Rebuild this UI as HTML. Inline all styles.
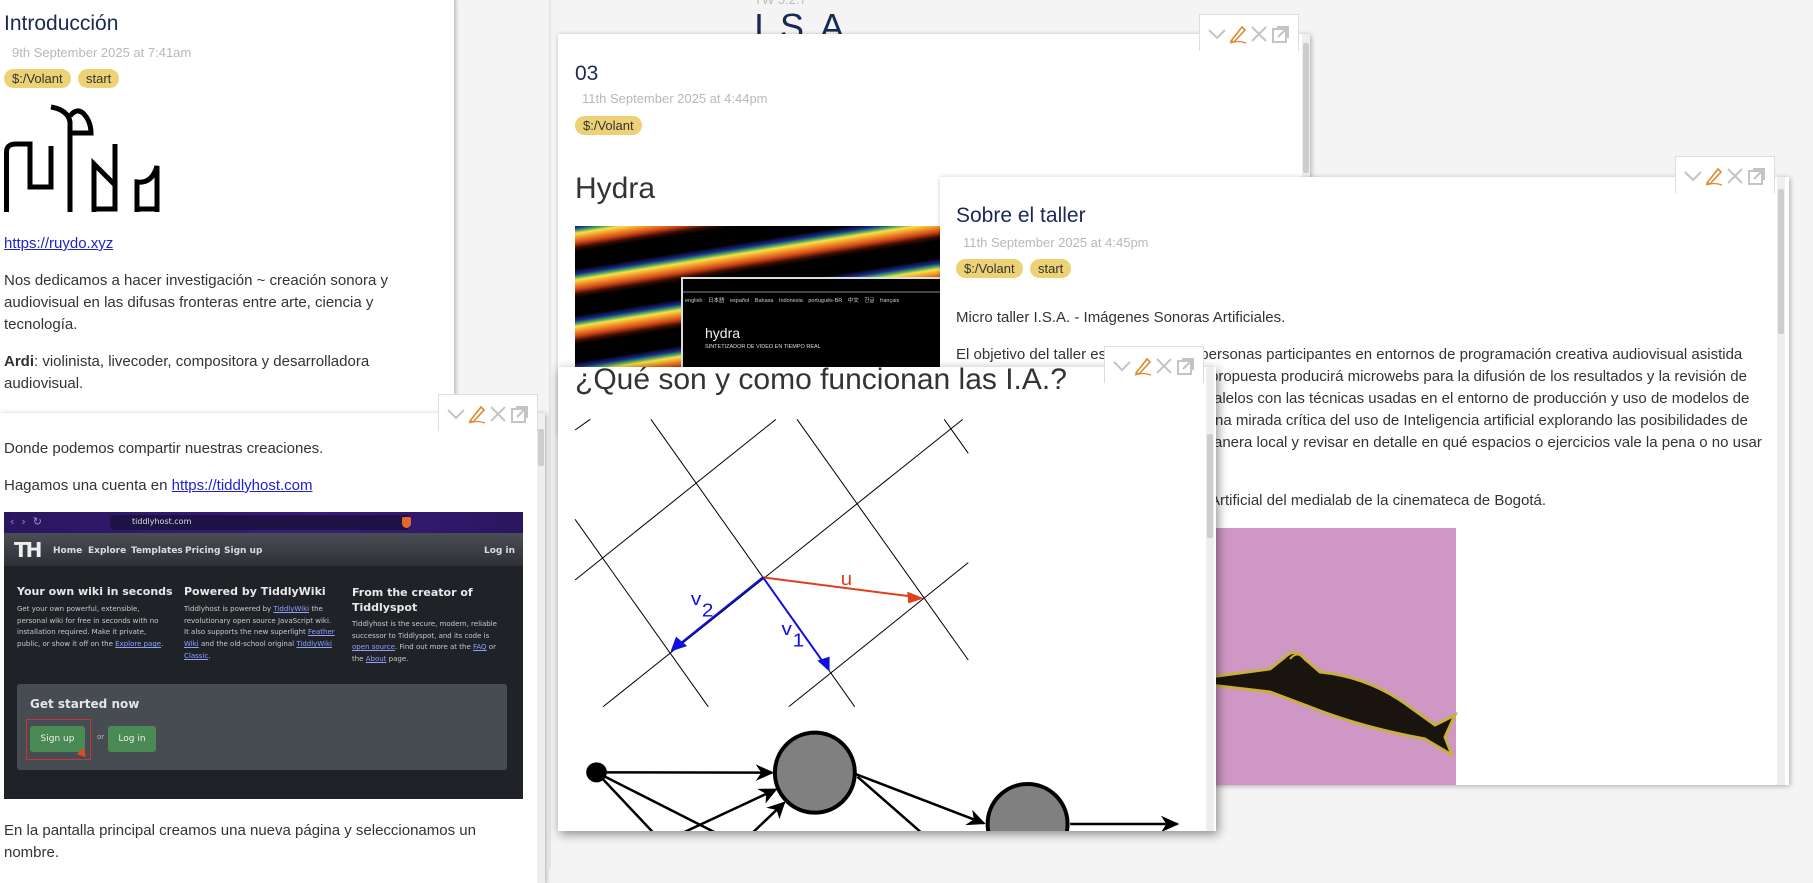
<!DOCTYPE html>
<html><head><meta charset="utf-8">
<style>
*{box-sizing:border-box;margin:0;padding:0}
body{width:1813px;height:869px;overflow:hidden;background:#f4f4f4;font-family:"Liberation Sans","Noto Sans CJK JP",sans-serif;color:#333;position:relative}
.p{position:absolute;background:#fff;overflow:hidden}
.sh{box-shadow:1px 1px 5px rgba(0,0,0,.3)}
.a{position:absolute;white-space:nowrap}
.t{color:#182955;font-size:21px}
.d{color:#b8b8b8;font-size:13px}
.tag{position:absolute;background:#ecd175;color:#333;font-size:13px;height:19px;line-height:19px;border-radius:10px;padding:0 8px;white-space:nowrap}
.b{font-size:15px;line-height:22px}
.bar{position:absolute;width:100px;height:37px;background:#fff;border:1px solid #ddd;border-bottom:none;z-index:5}
.bar svg{position:absolute;left:8px;top:9px}
.sb{position:absolute;width:8px;background:#eee}
.sb i{position:absolute;left:1px;width:6px;background:#cdcdcd;border-radius:2px}
a{color:#2222cc}
.th{font-family:"DejaVu Sans",sans-serif}
</style></head><body>

<!-- header -->
<div class="a" style="left:754px;top:-8px;font-size:13px;color:#bbb">TW 5.2.7</div>
<div class="a" style="left:754px;top:6px;font-size:36px;color:#182955;letter-spacing:3px">I.S.A</div>
<div style="position:absolute;left:549px;top:0;width:2px;height:869px;background:#e6e6e6"></div>

<!-- left top panel -->
<div class="p sh" style="left:0;top:-5px;width:454px;height:418px">
  <div class="a t" style="left:4px;top:17px">Introducción</div>
  <div class="a d" style="left:12px;top:50px">9th September 2025 at 7:41am</div>
  <div class="tag" style="left:4px;top:74px">$:/Volant</div>
  <div class="tag" style="left:78px;top:74px">start</div>
  <svg style="position:absolute;left:4px;top:107px" width="156" height="110" viewBox="0 0 156 110" fill="none" stroke="#000" stroke-width="5">
    <path d="M2.5 110 V50 Q2.5 42 12 42 H26 V59 M26 59 V85 H47 V44"/>
    <path d="M47 5 Q64 8 66 20 V110 M66 14 Q73 5 80 12 Q87 20 87 31 H66"/>
    <path d="M90 110 V62 L111 83 V42 M90 107 H111 V80"/>
    <path d="M133 110 V80 Q148 82 153 64 V110 M131 107 H153"/>
  </svg>
  <div class="a b" style="left:4px;top:238px"><a href="#">https://ruydo.xyz</a></div>
  <div class="a b" style="left:4px;top:275px">Nos dedicamos a hacer investigación ~ creación sonora y<br>audiovisual en las difusas fronteras entre arte, ciencia y<br>tecnología.</div>
  <div class="a b" style="left:4px;top:356px"><b>Ardi</b>: violinista, livecoder, compositora y desarrolladora<br>audiovisual.</div>
</div>

<!-- left second panel -->
<div class="bar" style="left:438px;top:394px"><svg width="88" height="20" viewBox="0 0 88 20"><g fill="none" stroke="#c4c4c4" stroke-width="2"><path d="M1 6 L9 14 L17 6"/><path d="M44 3 L58 17 M58 3 L44 17"/></g><path d="M23 17 L34 3 L37 6 L26 18 Z" fill="none" stroke="#e08a2e" stroke-width="1.6"/><path d="M22 19 Q30 16 38 19" fill="none" stroke="#e08a2e" stroke-width="1.3"/><g fill="none" stroke="#c4c4c4" stroke-width="2"><rect x="65" y="5" width="13" height="13"/><path d="M69 3 H80 V14"/><path d="M70 13 L79 4"/></g></svg></div>
<div class="p sh" style="left:0;top:413px;width:545px;height:470px">
  <div class="a b" style="left:4px;top:25px">Donde podemos compartir nuestras creaciones.</div>
  <div class="a b" style="left:4px;top:62px">Hagamos una cuenta en <a href="#">https://tiddlyhost.com</a></div>
  <div style="position:absolute;left:4px;top:99px;width:519px;height:287px;background:#1f2328;overflow:hidden" class="th">
    <div style="position:absolute;left:0;top:0;width:519px;height:21px;background:linear-gradient(90deg,#2a1660,#3a1c7a 60%,#2a1660)"></div>
    <div class="a" style="left:6px;top:3px;font-size:11px;color:#9a8fd0">‹ &nbsp;› &nbsp;↻</div>
    <div style="position:absolute;left:106px;top:3px;width:300px;height:15px;background:#1f1245;border-radius:4px"></div>
    <div class="a" style="left:128px;top:5px;font-size:8px;color:#ddd">tiddlyhost.com</div>
    <div style="position:absolute;left:398px;top:5px;width:9px;height:11px;background:#e0682a;border-radius:2px 2px 5px 5px"></div>
    <div style="position:absolute;left:0;top:21px;width:519px;height:33px;background:linear-gradient(#4a4d54,#2e3136)"></div>
    <div class="a" style="left:10px;top:26px;font-size:20px;font-weight:bold;color:#eee;letter-spacing:-2px">TH</div>
    <div class="a" style="left:49px;top:34px;font-size:9px;font-weight:bold;color:#ddd">Home</div>
    <div class="a" style="left:84px;top:34px;font-size:9px;font-weight:bold;color:#ddd">Explore</div>
    <div class="a" style="left:127px;top:34px;font-size:9px;font-weight:bold;color:#ddd">Templates</div>
    <div class="a" style="left:181px;top:34px;font-size:9px;font-weight:bold;color:#ddd">Pricing</div>
    <div class="a" style="left:220px;top:34px;font-size:9px;font-weight:bold;color:#ddd">Sign up</div>
    <div class="a" style="left:480px;top:34px;font-size:9px;font-weight:bold;color:#ddd">Log in</div>
    <div class="a" style="left:13px;top:73px;font-size:11px;font-weight:bold;color:#e8e8e8">Your own wiki in seconds</div>
    <div class="a" style="left:180px;top:73px;font-size:11px;font-weight:bold;color:#e8e8e8">Powered by TiddlyWiki</div>
    <div class="a" style="left:348px;top:73px;font-size:11px;font-weight:bold;color:#e8e8e8;line-height:15px">From the creator of<br>Tiddlyspot</div>
    <div class="a" style="left:13px;top:92px;font-size:7px;line-height:11.7px;color:#c8c8c8">Get your own powerful, extensible,<br>personal wiki for free in seconds with no<br>installation required. Make it private,<br>public, or show it off on the <u style="color:#8fa0ff">Explore page</u>.</div>
    <div class="a" style="left:180px;top:92px;font-size:7px;line-height:11.7px;color:#c8c8c8">Tiddlyhost is powered by <u style="color:#8fa0ff">TiddlyWiki</u> the<br>revolutionary open source JavaScript wiki.<br>It also supports the new superlight <u style="color:#8fa0ff">Feather</u><br><u style="color:#8fa0ff">Wiki</u> and the old-school original <u style="color:#8fa0ff">TiddlyWiki</u><br><u style="color:#8fa0ff">Classic</u>.</div>
    <div class="a" style="left:348px;top:107px;font-size:7px;line-height:11.7px;color:#c8c8c8">Tiddlyhost is the secure, modern, reliable<br>successor to Tiddlyspot, and its code is<br><u style="color:#8fa0ff">open source</u>. Find out more at the <u style="color:#8fa0ff">FAQ</u> or<br>the <u style="color:#8fa0ff">About</u> page.</div>
    <div style="position:absolute;left:13px;top:172px;width:490px;height:86px;background:#474b52;border-radius:3px"></div>
    <div class="a" style="left:26px;top:185px;font-size:12px;font-weight:bold;color:#e5e5e5">Get started now</div>
    <div style="position:absolute;left:22px;top:207px;width:65px;height:41px;border:1px solid #c33"></div>
    <div style="position:absolute;left:26px;top:214px;width:55px;height:26px;background:#4a8a55;border-radius:3px;color:#eee;font-size:9px;text-align:center;line-height:26px">Sign up</div>
    <div class="a" style="left:93px;top:221px;font-size:7px;color:#bbb">or</div>
    <div style="position:absolute;left:104px;top:214px;width:48px;height:26px;background:#4a8a55;border-radius:3px;color:#eee;font-size:9px;text-align:center;line-height:26px">Log in</div>
    <div style="position:absolute;left:74px;top:238px;width:0;height:0;border-left:5px solid transparent;border-right:5px solid transparent;border-top:8px solid #e04a2a;transform:rotate(-40deg)"></div>
  </div>
  <div class="a b" style="left:4px;top:407px">En la pantalla principal creamos una nueva página y seleccionamos un<br>nombre.</div>
  <div class="sb" style="left:537px;top:-20px;height:500px"><i style="top:36px;height:37px"></i></div>
</div>

<!-- panel 03 -->
<div class="bar" style="left:1199px;top:14px"><svg width="88" height="20" viewBox="0 0 88 20"><g fill="none" stroke="#c4c4c4" stroke-width="2"><path d="M1 6 L9 14 L17 6"/><path d="M44 3 L58 17 M58 3 L44 17"/></g><path d="M23 17 L34 3 L37 6 L26 18 Z" fill="none" stroke="#e08a2e" stroke-width="1.6"/><path d="M22 19 Q30 16 38 19" fill="none" stroke="#e08a2e" stroke-width="1.3"/><g fill="none" stroke="#c4c4c4" stroke-width="2"><rect x="65" y="5" width="13" height="13"/><path d="M69 3 H80 V14"/><path d="M70 13 L79 4"/></g></svg></div>
<div class="p sh" style="left:558px;top:34px;width:752px;height:400px">
  <div class="a t" style="left:17px;top:28px">03</div>
  <div class="a d" style="left:24px;top:57px">11th September 2025 at 4:44pm</div>
  <div class="tag" style="left:17px;top:82px">$:/Volant</div>
  <div class="a" style="left:17px;top:138px;font-size:30px;color:#333">Hydra</div>
  <div style="position:absolute;left:17px;top:192px;width:380px;height:160px;background:repeating-linear-gradient(-9deg,#000 0px,#000 8px,#3a0d00 12px,#d4481a 17px,#f29a2a 22px,#f7e04a 26px,#3fa060 29px,#1a2a8a 32px,#000 37px,#000 46px)"></div>
  <div style="position:absolute;left:123px;top:243px;width:300px;height:120px;background:#000;border-top:2px solid #ddd;border-left:2px solid #ddd"></div>
  <div style="position:absolute;left:125px;top:257px;width:300px;height:2px;background:#444"></div>
  <div class="a" style="left:127px;top:262px;font-size:5.5px;color:#ccc;word-spacing:4px">english 日本語 español Bahasa Indonesia português-BR 中文 한글 français</div>
  <div class="a" style="left:147px;top:291px;font-size:14px;color:#eee">hydra</div>
  <div class="a" style="left:147px;top:310px;font-size:5.5px;color:#ddd">SINTETIZADOR DE VIDEO EN TIEMPO REAL</div>
  <div class="sb" style="left:744px;top:0;height:400px"><i style="top:9px;height:130px"></i></div>
</div>

<!-- Sobre el taller -->
<div class="bar" style="left:1675px;top:156px"><svg width="88" height="20" viewBox="0 0 88 20"><g fill="none" stroke="#c4c4c4" stroke-width="2"><path d="M1 6 L9 14 L17 6"/><path d="M44 3 L58 17 M58 3 L44 17"/></g><path d="M23 17 L34 3 L37 6 L26 18 Z" fill="none" stroke="#e08a2e" stroke-width="1.6"/><path d="M22 19 Q30 16 38 19" fill="none" stroke="#e08a2e" stroke-width="1.3"/><g fill="none" stroke="#c4c4c4" stroke-width="2"><rect x="65" y="5" width="13" height="13"/><path d="M69 3 H80 V14"/><path d="M70 13 L79 4"/></g></svg></div>
<div class="p sh" style="left:940px;top:177px;width:849px;height:608px;z-index:2">
  <div class="a t" style="left:16px;top:27px">Sobre el taller</div>
  <div class="a d" style="left:23px;top:58px">11th September 2025 at 4:45pm</div>
  <div class="tag" style="left:16px;top:82px">$:/Volant</div>
  <div class="tag" style="left:90px;top:82px">start</div>
  <div class="a b" style="left:16px;top:130px">Micro taller I.S.A. - Imágenes Sonoras Artificiales.</div>
  <div class="a b" style="left:16px;top:167px">El objetivo del taller es acercar a las personas participantes en entornos de programación creativa audiovisual asistida</div>
  <div class="a b" style="left:270px;top:189px">propuesta producirá microwebs para la difusión de los resultados y la revisión de</div>
  <div class="a b" style="left:274px;top:211px">alelos con las técnicas usadas en el entorno de producción y uso de modelos de</div>
  <div class="a b" style="left:275px;top:233px">na mirada crítica del uso de Inteligencia artificial explorando las posibilidades de</div>
  <div class="a b" style="left:274px;top:255px">anera local y revisar en detalle en qué espacios o ejercicios vale la pena o no usar</div>
  <div class="a b" style="left:270px;top:313px">Artificial del medialab de la cinemateca de Bogotá.</div>
  <div style="position:absolute;left:276px;top:351px;width:240px;height:270px;background:#cf97c5"></div>
  <svg style="position:absolute;left:270px;top:460px" width="250" height="120" viewBox="0 0 250 120">
    <path d="M0 40 L60 32 L75 20 Q85 10 95 22 L110 35 Q160 40 200 70 L225 88 L245 78 L235 100 L242 118 L215 102 Q150 90 100 70 L60 55 L0 48 Z" fill="#1a140e" stroke="#c8b040" stroke-width="3"/>
    <path d="M80 22 Q88 12 96 24" fill="none" stroke="#c8b040" stroke-width="2"/>
  </svg>
  <div class="sb" style="left:837px;top:0;height:608px"><i style="top:12px;height:145px"></i></div>
</div>

<!-- Que son -->
<div class="bar" style="left:1104px;top:346px;z-index:6"><svg width="88" height="20" viewBox="0 0 88 20"><g fill="none" stroke="#c4c4c4" stroke-width="2"><path d="M1 6 L9 14 L17 6"/><path d="M44 3 L58 17 M58 3 L44 17"/></g><path d="M23 17 L34 3 L37 6 L26 18 Z" fill="none" stroke="#e08a2e" stroke-width="1.6"/><path d="M22 19 Q30 16 38 19" fill="none" stroke="#e08a2e" stroke-width="1.3"/><g fill="none" stroke="#c4c4c4" stroke-width="2"><rect x="65" y="5" width="13" height="13"/><path d="M69 3 H80 V14"/><path d="M70 13 L79 4"/></g></svg></div>
<div class="p" style="left:558px;top:367px;width:658px;height:464px;z-index:3;box-shadow:2px 3px 10px rgba(0,0,0,.45)">
  <div class="a" style="left:17px;top:-4px;font-size:30px;color:#333">¿Qué son y como funcionan las I.A.?</div>
  <svg style="position:absolute;left:-78px;top:-77px" width="580" height="440" viewBox="0 0 1568 1320" preserveAspectRatio="none">
    <g stroke="#000" stroke-width="1" fill="none">
      <path vector-effect="non-scaling-stroke" d="M257 420 L298 388"/>
      <path vector-effect="non-scaling-stroke" d="M257 870 L800 388"/>
      <path vector-effect="non-scaling-stroke" d="M333 1250 L1305 388"/>
      <path vector-effect="non-scaling-stroke" d="M835 1250 L1320 818"/>
      <path vector-effect="non-scaling-stroke" d="M462 388 L1013 1250"/>
      <path vector-effect="non-scaling-stroke" d="M257 688 L617 1250"/>
      <path vector-effect="non-scaling-stroke" d="M857 388 L1320 1110"/>
      <path vector-effect="non-scaling-stroke" d="M1255 388 L1320 490"/>
    </g>
    <path d="M765 862 L1170 920" stroke="#e0401a" stroke-width="2" vector-effect="non-scaling-stroke"/>
    <path d="M1200 925 L1155 905 L1158 940 Z" fill="#e0401a"/>
    <path d="M765 862 L540 1062" stroke="#1010dd" stroke-width="2" vector-effect="non-scaling-stroke"/>
    <path d="M515 1085 L530 1040 L560 1068 Z" fill="#1010dd"/>
    <path d="M765 862 L930 1120" stroke="#1010dd" stroke-width="2" vector-effect="non-scaling-stroke"/>
    <path d="M945 1145 L912 1112 L945 1100 Z" fill="#1010dd"/>
    <g font-family="Liberation Sans,sans-serif" font-size="56">
      <text x="975" y="885" fill="#e0401a">u</text>
      <text x="570" y="945" fill="#1010dd">v</text><text x="600" y="980" fill="#1010dd">2</text>
      <text x="815" y="1035" fill="#1010dd">v</text><text x="845" y="1070" fill="#1010dd">1</text>
    </g>
  </svg>
  <svg style="position:absolute;left:-78px;top:253px" width="740" height="249" viewBox="0 0 2000 747" preserveAspectRatio="none">
    <defs><marker id="ar" viewBox="0 0 10 10" refX="9" refY="5" markerWidth="7" markerHeight="7" orient="auto"><path d="M0 0 L10 5 L0 10 L3 5 Z" fill="#000"/></marker></defs>
    <g stroke="#000" stroke-width="2.5" fill="none">
      <path vector-effect="non-scaling-stroke" d="M315 457 L790 458" marker-end="url(#ar)"/>
      <path vector-effect="non-scaling-stroke" d="M315 457 L640 640"/>
      <path vector-effect="non-scaling-stroke" d="M315 457 L470 640"/>
      <path vector-effect="non-scaling-stroke" d="M545 640 L800 508" marker-end="url(#ar)"/>
      <path vector-effect="non-scaling-stroke" d="M735 640 L822 548" marker-end="url(#ar)"/>
      <path vector-effect="non-scaling-stroke" d="M1015 462 L1362 610" marker-end="url(#ar)"/>
      <path vector-effect="non-scaling-stroke" d="M1020 470 L1195 640"/>
      <path vector-effect="non-scaling-stroke" d="M1595 612 L1885 612" marker-end="url(#ar)"/>
    </g>
    <ellipse cx="315" cy="457" rx="28" ry="30" fill="#000"/>
    <ellipse cx="905" cy="458" rx="108" ry="120" fill="#808080" stroke="#000" stroke-width="4" vector-effect="non-scaling-stroke"/>
    <ellipse cx="1480" cy="612" rx="108" ry="120" fill="#808080" stroke="#000" stroke-width="4" vector-effect="non-scaling-stroke"/>
  </svg>
  <div class="sb" style="left:648px;top:0;height:464px"><i style="top:67px;height:104px"></i></div>
</div>

</body></html>
